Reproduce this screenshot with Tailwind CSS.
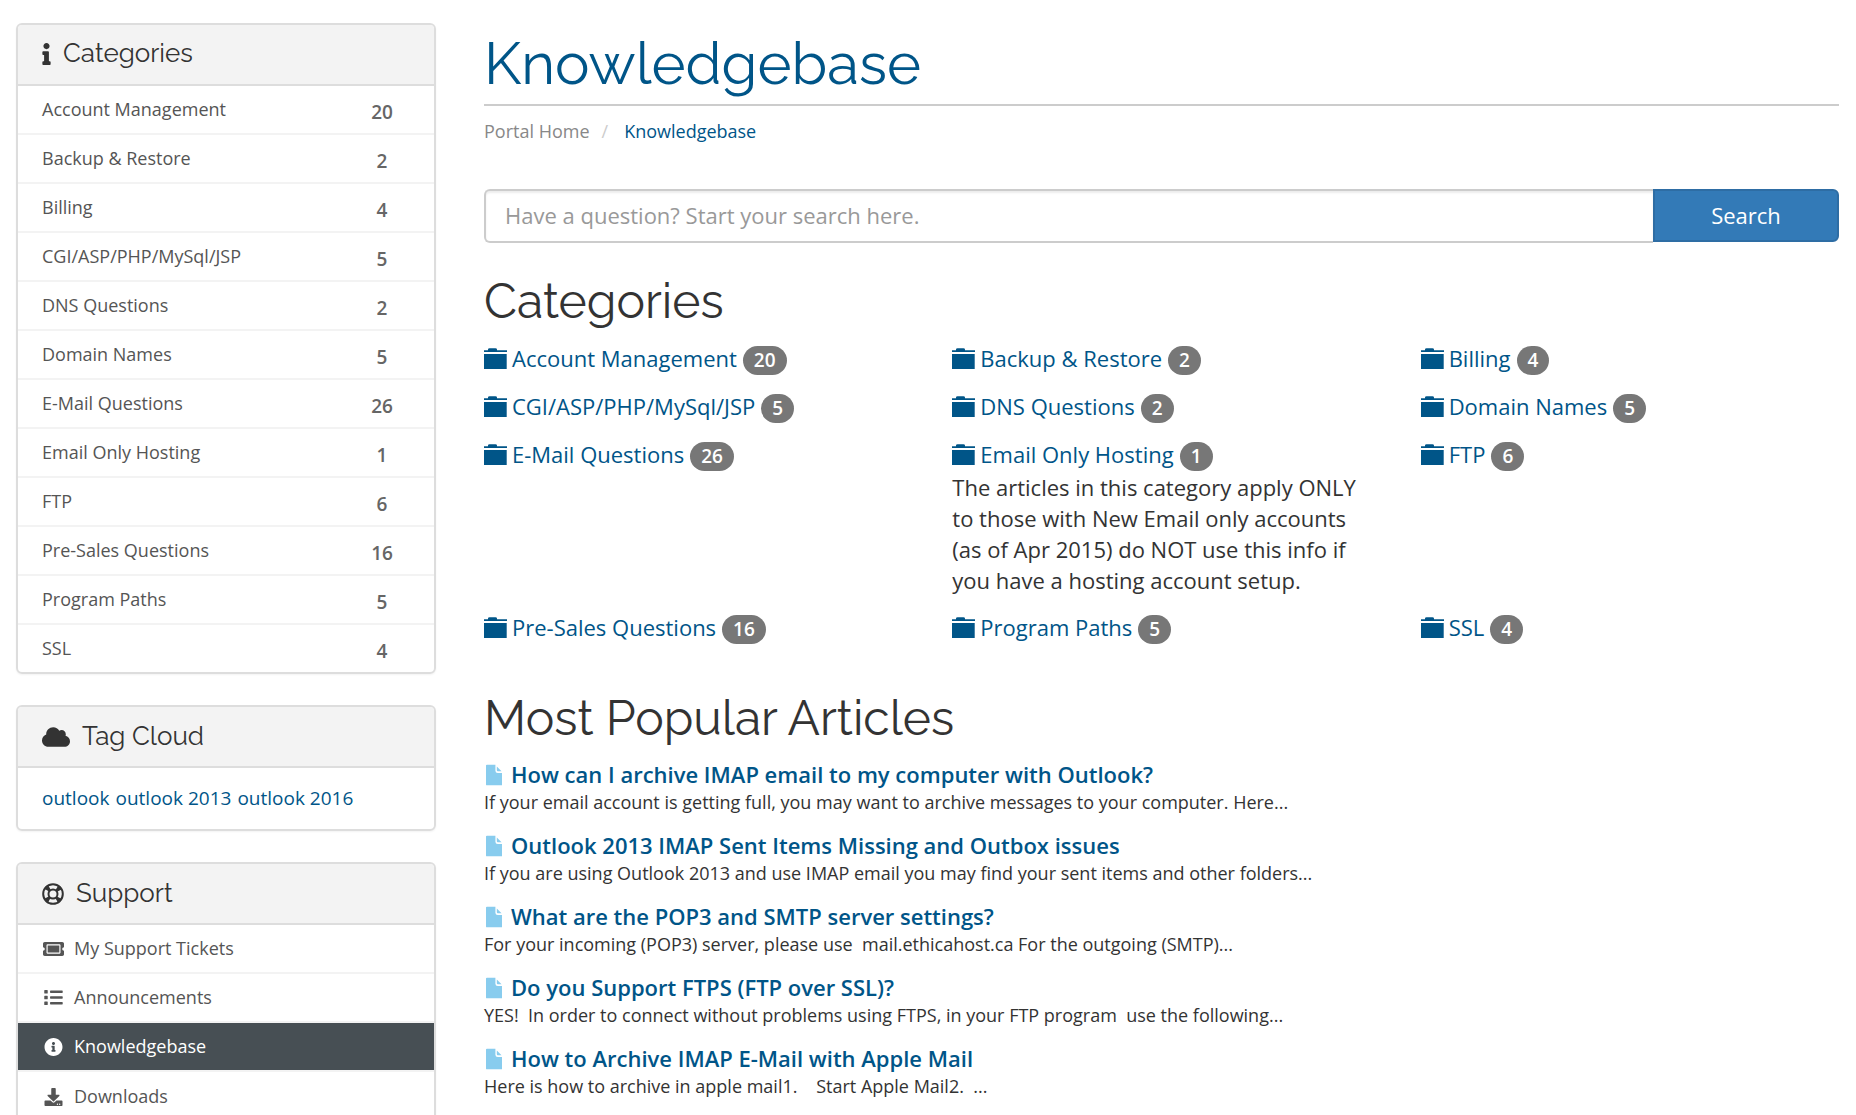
<!DOCTYPE html>
<html lang="en">
<head>
<meta charset="utf-8">
<meta name="viewport" content="width=device-width, initial-scale=1">
<title>Knowledgebase</title>
<script src="https://cdn.jsdelivr.net/npm/@tailwindcss/browser@4"></script>
</head>
<body class="bg-white font-['Open_Sans',sans-serif] text-[22px] leading-[31px] text-[#333]">
<svg class="hidden" aria-hidden="true">
  <symbol id="folder" viewBox="0 0 23 21"><path d="M0 2.2h4V1.4Q4 .2 5.6.2h5.8Q13 .2 13 1.4v.8h10V4H0zM0 6h22.7v15H0z"/></symbol>
  <symbol id="file" viewBox="0 0 17 22"><path d="M1 0h9v6.5Q10 9 12.500 9H17v13H1Q0 22 0 21V1Q0 0 1 0zM11.500 2l5 5h-4q-1 0-1-1z"/></symbol>
  <symbol id="info" viewBox="0 0 192 512"><path d="M20 424.229h20V279.771H20c-11.046 0-20-8.954-20-20V212c0-11.046 8.954-20 20-20h112c11.046 0 20 8.954 20 20v212.229h20c11.046 0 20 8.954 20 20V492c0 11.046-8.954 20-20 20H20c-11.046 0-20-8.954-20-20v-47.771c0-11.046 8.954-20 20-20zM96 0C56.235 0 24 32.235 24 72s32.235 72 72 72 72-32.235 72-72S135.764 0 96 0z"/></symbol>
  <symbol id="cloud" viewBox="0 32 640 448"><path d="M537.600 226.600c4.100-10.700 6.400-22.400 6.400-34.600 0-53-43-96-96-96-19.700 0-38.100 6-53.300 16.200C367 64.200 315.300 32 256 32c-88.400 0-160 71.600-160 160 0 2.700.1 5.400.2 8.100C40.200 219.800 0 273.200 0 336c0 79.500 64.500 144 144 144h368c70.700 0 128-57.300 128-128 0-61.900-44-113.600-102.400-125.400z"/></symbol>
  <symbol id="ring" viewBox="0 0 22 22"><g fill="none" stroke="currentColor"><circle cx="11" cy="11" r="9.800" stroke-width="2"/><circle cx="11" cy="11" r="4.500" stroke-width="2"/><circle cx="11" cy="11" r="7.400" stroke-width="5.400" stroke-dasharray="3.800 7.824" stroke-dashoffset="-3.912"/></g></symbol>
  <symbol id="ticket" viewBox="0 64 576 384"><path d="M128 160h320v192H128V160zm400 96c0 26.510 21.490 48 48 48v96c0 26.510-21.490 48-48 48H48c-26.510 0-48-21.490-48-48v-96c26.510 0 48-21.490 48-48s-21.490-48-48-48v-96c0-26.510 21.490-48 48-48h480c26.510 0 48 21.490 48 48v96c-26.510 0-48 21.490-48 48zm-48-104c0-13.255-10.745-24-24-24H120c-13.255 0-24 10.745-24 24v208c0 13.255 10.745 24 24 24h336c13.255 0 24-10.745 24-24V152z"/></symbol>
  <symbol id="list" viewBox="0 48 512 416"><path d="M80 368H16a16 16 0 0 0-16 16v64a16 16 0 0 0 16 16h64a16 16 0 0 0 16-16v-64a16 16 0 0 0-16-16zm0-320H16A16 16 0 0 0 0 64v64a16 16 0 0 0 16 16h64a16 16 0 0 0 16-16V64a16 16 0 0 0-16-16zm0 160H16a16 16 0 0 0-16 16v64a16 16 0 0 0 16 16h64a16 16 0 0 0 16-16v-64a16 16 0 0 0-16-16zm416 176H176a16 16 0 0 0-16 16v32a16 16 0 0 0 16 16h320a16 16 0 0 0 16-16v-32a16 16 0 0 0-16-16zm0-320H176a16 16 0 0 0-16 16v32a16 16 0 0 0 16 16h320a16 16 0 0 0 16-16V80a16 16 0 0 0-16-16zm0 160H176a16 16 0 0 0-16 16v32a16 16 0 0 0 16 16h320a16 16 0 0 0 16-16v-32a16 16 0 0 0-16-16z"/></symbol>
  <symbol id="info-circle" viewBox="8 8 496 496"><path d="M256 8C119.043 8 8 119.083 8 256c0 136.997 111.043 248 248 248s248-111.003 248-248C504 119.083 392.957 8 256 8zm0 110c23.196 0 42 18.804 42 42s-18.804 42-42 42-42-18.804-42-42 18.804-42 42-42zm56 254c0 6.627-5.373 12-12 12h-88c-6.627 0-12-5.373-12-12v-24c0-6.627 5.373-12 12-12h12v-64h-12c-6.627 0-12-5.373-12-12v-24c0-6.627 5.373-12 12-12h64c6.627 0 12 5.373 12 12v100h12c6.627 0 12 5.373 12 12v24z"/></symbol>
  <symbol id="download" viewBox="0 0 512 512"><path d="M216 0h80c13.300 0 24 10.700 24 24v168h87.700c17.800 0 26.700 21.500 14.100 34.100L269.700 378.300c-7.500 7.500-19.800 7.500-27.300 0L90.100 226.100c-12.600-12.600-3.700-34.100 14.100-34.100H192V24c0-13.300 10.700-24 24-24zm296 376v112c0 13.300-10.700 24-24 24H24c-13.300 0-24-10.700-24-24V376c0-13.300 10.700-24 24-24h146.700l49 49c20.100 20.100 52.500 20.100 72.600 0l49-49H488c13.300 0 24 10.700 24 24zm-124 88c0-11-9-20-20-20s-20 9-20 20 9 20 20 20 20-9 20-20zm64 0c0-11-9-20-20-20s-20 9-20 20 9 20 20 20 20-9 20-20z"/></symbol>
</svg>

<div class="grid items-start gap-x-12 gap-y-8 pl-4 pr-[17px] pt-[23px] lg:grid-cols-[420px_minmax(0,1fr)]">
  <aside class="flex flex-col gap-[31px]">
    <section class="overflow-hidden rounded-md border-2 border-[#ddd] shadow-xs">
      <h3 class="flex h-[61px] items-center gap-3 border-b-2 border-[#ddd] bg-[#f3f3f3] px-6 pb-0.5 font-[Raleway,Lato,sans-serif] text-[26px] font-normal"><svg class="h-[22px] w-[9px] fill-current"><use href="#info"/></svg>Categories</h3>
      <nav class="divide-y-2 divide-[#f3f3f3] text-[18px] text-[#555]">
        <a href="#" class="flex h-[49px] items-center justify-between pl-6 pr-[25px] last:h-[47px]">Account Management<span class="w-[54px] pt-1.5 text-center text-[19px] font-semibold text-[#666]">20</span></a>
        <a href="#" class="flex h-[49px] items-center justify-between pl-6 pr-[25px] last:h-[47px]">Backup &amp; Restore<span class="w-[54px] pt-1.5 text-center text-[19px] font-semibold text-[#666]">2</span></a>
        <a href="#" class="flex h-[49px] items-center justify-between pl-6 pr-[25px] last:h-[47px]">Billing<span class="w-[54px] pt-1.5 text-center text-[19px] font-semibold text-[#666]">4</span></a>
        <a href="#" class="flex h-[49px] items-center justify-between pl-6 pr-[25px] last:h-[47px]">CGI/ASP/PHP/MySql/JSP<span class="w-[54px] pt-1.5 text-center text-[19px] font-semibold text-[#666]">5</span></a>
        <a href="#" class="flex h-[49px] items-center justify-between pl-6 pr-[25px] last:h-[47px]">DNS Questions<span class="w-[54px] pt-1.5 text-center text-[19px] font-semibold text-[#666]">2</span></a>
        <a href="#" class="flex h-[49px] items-center justify-between pl-6 pr-[25px] last:h-[47px]">Domain Names<span class="w-[54px] pt-1.5 text-center text-[19px] font-semibold text-[#666]">5</span></a>
        <a href="#" class="flex h-[49px] items-center justify-between pl-6 pr-[25px] last:h-[47px]">E-Mail Questions<span class="w-[54px] pt-1.5 text-center text-[19px] font-semibold text-[#666]">26</span></a>
        <a href="#" class="flex h-[49px] items-center justify-between pl-6 pr-[25px] last:h-[47px]">Email Only Hosting<span class="w-[54px] pt-1.5 text-center text-[19px] font-semibold text-[#666]">1</span></a>
        <a href="#" class="flex h-[49px] items-center justify-between pl-6 pr-[25px] last:h-[47px]">FTP<span class="w-[54px] pt-1.5 text-center text-[19px] font-semibold text-[#666]">6</span></a>
        <a href="#" class="flex h-[49px] items-center justify-between pl-6 pr-[25px] last:h-[47px]">Pre-Sales Questions<span class="w-[54px] pt-1.5 text-center text-[19px] font-semibold text-[#666]">16</span></a>
        <a href="#" class="flex h-[49px] items-center justify-between pl-6 pr-[25px] last:h-[47px]">Program Paths<span class="w-[54px] pt-1.5 text-center text-[19px] font-semibold text-[#666]">5</span></a>
        <a href="#" class="flex h-[49px] items-center justify-between pl-6 pr-[25px] last:h-[47px]">SSL<span class="w-[54px] pt-1.5 text-center text-[19px] font-semibold text-[#666]">4</span></a>
      </nav>
    </section>

    <section class="overflow-hidden rounded-md border-2 border-[#ddd] shadow-xs">
      <h3 class="flex h-[61px] items-center gap-3 border-b-2 border-[#ddd] bg-[#f3f3f3] px-6 font-[Raleway,Lato,sans-serif] text-[26px] font-normal"><svg class="h-[20px] w-[28px] fill-current"><use href="#cloud"/></svg>Tag Cloud</h3>
      <p class="flex h-[61px] items-center gap-1.5 px-6 text-[19px] text-[#058]"><a href="#">outlook</a><a href="#">outlook 2013</a><a href="#">outlook 2016</a></p>
    </section>

    <section class="overflow-hidden rounded-md border-2 border-[#ddd] shadow-xs">
      <h3 class="flex h-[61px] items-center gap-3 border-b-2 border-[#ddd] bg-[#f3f3f3] px-6 font-[Raleway,Lato,sans-serif] text-[26px] font-normal"><svg class="h-[22px] w-[22px] fill-current"><use href="#ring"/></svg>Support</h3>
      <nav class="divide-y-2 divide-[#f3f3f3] text-[18px] text-[#555]">
        <a href="#" class="flex h-[49px] items-center gap-[9px] px-6"><svg class="h-[14px] w-[23px] fill-current"><use href="#ticket"/></svg>My Support Tickets</a>
        <a href="#" class="flex h-[49px] items-center gap-[9px] px-6"><svg class="h-[15px] w-[23px] fill-current"><use href="#list"/></svg>Announcements</a>
        <a href="#" aria-current="page" class="flex h-[49px] items-center gap-[9px] bg-[#474f54] px-6 text-white"><svg class="h-[18px] w-[23px] fill-current"><use href="#info-circle"/></svg>Knowledgebase</a>
        <a href="#" class="flex h-[49px] items-center gap-[9px] px-6"><svg class="h-[18px] w-[23px] fill-current"><use href="#download"/></svg>Downloads</a>
      </nav>
    </section>
  </aside>

  <main>
    <h1 class="border-b-2 border-[#ccc] pt-[7px] pb-1.5 font-[Raleway,Lato,sans-serif] text-[58px] leading-[68px] font-normal text-[#058]">Knowledgebase</h1>
    <nav aria-label="Breadcrumb" class="flex gap-3 pt-[10px] text-[18px]"><a href="#" class="text-[#888]">Portal Home</a><span class="text-[#ccc]">/</span><a href="#" class="pl-1 text-[#058]">Knowledgebase</a></nav>
    <form class="mt-[42px] flex h-[54px]">
      <input type="text" aria-label="Search the knowledgebase" placeholder="Have a question? Start your search here." class="min-w-0 flex-1 rounded-l-md border-2 border-r-0 border-[#ccc] px-[19px] pb-0.5 text-[22px] shadow-[inset_0_2px_2px_rgba(0,0,0,0.075)] placeholder:text-[#999]">
      <button type="button" class="mb-px w-[186px] rounded-r-md border-2 border-[#2e6da4] bg-[#337ab7] text-[22px] text-white">Search</button>
    </form>

    <h2 class="mt-[30px] font-[Raleway,Lato,sans-serif] text-[48px] leading-[56px] font-normal">Categories</h2>
    <div class="mt-[13px] grid grid-cols-3 gap-x-[50px] gap-y-[15px]">
      <div><div class="flex items-center gap-1.5"><a href="#" class="flex items-center gap-[5px] text-[#058]"><svg class="h-[21px] w-[23px] fill-current"><use href="#folder"/></svg>Account Management</a><span class="mt-1 rounded-full bg-[#777] px-[11px] text-[19px] leading-[29px] font-semibold text-white">20</span></div></div>
      <div><div class="flex items-center gap-1.5"><a href="#" class="flex items-center gap-[5px] text-[#058]"><svg class="h-[21px] w-[23px] fill-current"><use href="#folder"/></svg>Backup &amp; Restore</a><span class="mt-1 rounded-full bg-[#777] px-[11px] text-[19px] leading-[29px] font-semibold text-white">2</span></div></div>
      <div><div class="flex items-center gap-1.5"><a href="#" class="flex items-center gap-[5px] text-[#058]"><svg class="h-[21px] w-[23px] fill-current"><use href="#folder"/></svg>Billing</a><span class="mt-1 rounded-full bg-[#777] px-[11px] text-[19px] leading-[29px] font-semibold text-white">4</span></div></div>
      <div><div class="flex items-center gap-1.5"><a href="#" class="flex items-center gap-[5px] text-[#058]"><svg class="h-[21px] w-[23px] fill-current"><use href="#folder"/></svg>CGI/ASP/PHP/MySql/JSP</a><span class="mt-1 rounded-full bg-[#777] px-[11px] text-[19px] leading-[29px] font-semibold text-white">5</span></div></div>
      <div><div class="flex items-center gap-1.5"><a href="#" class="flex items-center gap-[5px] text-[#058]"><svg class="h-[21px] w-[23px] fill-current"><use href="#folder"/></svg>DNS Questions</a><span class="mt-1 rounded-full bg-[#777] px-[11px] text-[19px] leading-[29px] font-semibold text-white">2</span></div></div>
      <div><div class="flex items-center gap-1.5"><a href="#" class="flex items-center gap-[5px] text-[#058]"><svg class="h-[21px] w-[23px] fill-current"><use href="#folder"/></svg>Domain Names</a><span class="mt-1 rounded-full bg-[#777] px-[11px] text-[19px] leading-[29px] font-semibold text-white">5</span></div></div>
      <div><div class="flex items-center gap-1.5"><a href="#" class="flex items-center gap-[5px] text-[#058]"><svg class="h-[21px] w-[23px] fill-current"><use href="#folder"/></svg>E-Mail Questions</a><span class="mt-1 rounded-full bg-[#777] px-[11px] text-[19px] leading-[29px] font-semibold text-white">26</span></div></div>
      <div><div class="flex items-center gap-1.5"><a href="#" class="flex items-center gap-[5px] text-[#058]"><svg class="h-[21px] w-[23px] fill-current"><use href="#folder"/></svg>Email Only Hosting</a><span class="mt-1 rounded-full bg-[#777] px-[11px] text-[19px] leading-[29px] font-semibold text-white">1</span></div><p class="pt-px">The articles in this category apply ONLY to those with New Email only accounts (as of Apr 2015) do NOT use this info if you have a hosting account setup.</p></div>
      <div><div class="flex items-center gap-1.5"><a href="#" class="flex items-center gap-[5px] text-[#058]"><svg class="h-[21px] w-[23px] fill-current"><use href="#folder"/></svg>FTP</a><span class="mt-1 rounded-full bg-[#777] px-[11px] text-[19px] leading-[29px] font-semibold text-white">6</span></div></div>
      <div><div class="flex items-center gap-1.5"><a href="#" class="flex items-center gap-[5px] text-[#058]"><svg class="h-[21px] w-[23px] fill-current"><use href="#folder"/></svg>Pre-Sales Questions</a><span class="mt-1 rounded-full bg-[#777] px-[11px] text-[19px] leading-[29px] font-semibold text-white">16</span></div></div>
      <div><div class="flex items-center gap-1.5"><a href="#" class="flex items-center gap-[5px] text-[#058]"><svg class="h-[21px] w-[23px] fill-current"><use href="#folder"/></svg>Program Paths</a><span class="mt-1 rounded-full bg-[#777] px-[11px] text-[19px] leading-[29px] font-semibold text-white">5</span></div></div>
      <div><div class="flex items-center gap-1.5"><a href="#" class="flex items-center gap-[5px] text-[#058]"><svg class="h-[21px] w-[23px] fill-current"><use href="#folder"/></svg>SSL</a><span class="mt-1 rounded-full bg-[#777] px-[11px] text-[19px] leading-[29px] font-semibold text-white">4</span></div></div>
    </div>

    <h2 class="mt-[46px] font-[Raleway,Lato,sans-serif] text-[48px] leading-[56px] font-normal">Most Popular Articles</h2>
    <div class="mt-[13px] flex flex-col gap-4">
      <article><a href="#" class="flex items-center gap-[9px] pl-0.5 font-semibold text-[#058]"><svg class="h-[22px] w-[16px] fill-[#8ce]"><use href="#file"/></svg>How can I archive IMAP email to my computer with Outlook?</a><p class="text-[18px] leading-[24px]">If your email account is getting full, you may want to archive messages to your computer. Here...</p></article>
      <article><a href="#" class="flex items-center gap-[9px] pl-0.5 font-semibold text-[#058]"><svg class="h-[22px] w-[16px] fill-[#8ce]"><use href="#file"/></svg>Outlook 2013 IMAP Sent Items Missing and Outbox issues</a><p class="text-[18px] leading-[24px]">If you are using Outlook 2013 and use IMAP email you may find your sent items and other folders...</p></article>
      <article><a href="#" class="flex items-center gap-[9px] pl-0.5 font-semibold text-[#058]"><svg class="h-[22px] w-[16px] fill-[#8ce]"><use href="#file"/></svg>What are the POP3 and SMTP server settings?</a><p class="text-[18px] leading-[24px]">For your incoming (POP3) server, please use &nbsp;mail.ethicahost.ca For the outgoing (SMTP)...</p></article>
      <article><a href="#" class="flex items-center gap-[9px] pl-0.5 font-semibold text-[#058]"><svg class="h-[22px] w-[16px] fill-[#8ce]"><use href="#file"/></svg>Do you Support FTPS (FTP over SSL)?</a><p class="text-[18px] leading-[24px]">YES! &nbsp;In order to connect without problems using FTPS, in your FTP program &nbsp;use the following...</p></article>
      <article><a href="#" class="flex items-center gap-[9px] pl-0.5 font-semibold text-[#058]"><svg class="h-[22px] w-[16px] fill-[#8ce]"><use href="#file"/></svg>How to Archive IMAP E-Mail with Apple Mail</a><p class="text-[18px] leading-[24px]">Here is how to archive in apple mail1. &nbsp; &nbsp;Start Apple Mail2. &nbsp;...</p></article>
    </div>
  </main>
</div>
</body>
</html>
